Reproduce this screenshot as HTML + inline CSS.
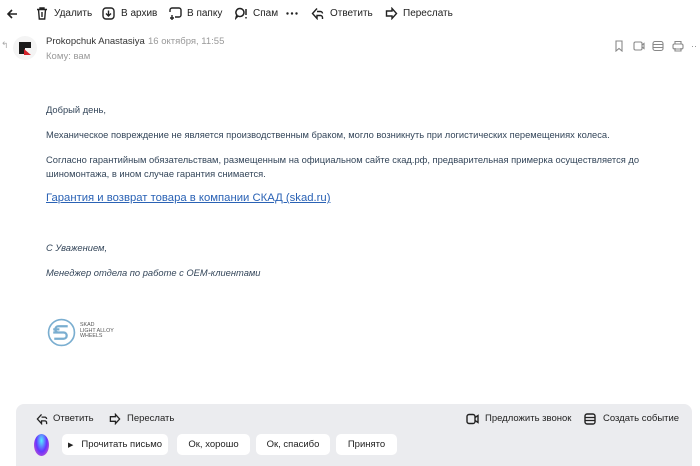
<!DOCTYPE html>
<html><head><meta charset="utf-8"><style>
*{margin:0;padding:0;box-sizing:border-box}
body{width:700px;height:464px;overflow:hidden;background:#fff;font-family:"Liberation Sans",sans-serif;color:#222;position:relative}
.a{position:absolute;white-space:nowrap}
.tb{font-size:10px;color:#222}
.body{font-size:9.35px;color:#34465a}
.it{font-style:italic}
.panel{position:absolute;left:16px;top:404px;width:676px;height:62px;background:#ebecef;border-radius:8px 8px 0 0}
.btn{position:absolute;top:30px;height:21px;background:#fff;border-radius:5px;font-size:9.5px;line-height:21px;text-align:center;color:#222}
svg{position:absolute}
</style></head><body>
<!-- toolbar -->
<svg style="left:6px;top:8px" width="12" height="12" viewBox="0 0 12 12"><path d="M11 6H2M6 2L2 6l4 4" stroke="#222" stroke-width="1.6" fill="none"/></svg>
<svg style="left:36px;top:7px" width="12" height="13" viewBox="0 0 12 13"><path d="M1 2.5h10M4 2.5V1h4v1.5M2.5 2.5l.8 9.5h5.4l.8-9.5M6 5v5" stroke="#222" stroke-width="1.4" fill="none"/></svg>
<div class="a tb" style="left:54px;top:8px">Удалить</div>
<svg style="left:102px;top:7px" width="13" height="13" viewBox="0 0 13 13"><rect x="1" y="1" width="11" height="11" rx="3" stroke="#222" stroke-width="1.4" fill="none"/><path d="M6.5 3.5v5M4 6.5l2.5 2.5L9 6.5" stroke="#222" stroke-width="1.4" fill="none"/></svg>
<div class="a tb" style="left:121px;top:8px">В архив</div>
<svg style="left:169px;top:7px" width="13" height="13" viewBox="0 0 13 13"><path d="M3 1h7a2 2 0 0 1 2 2v5a2 2 0 0 1-2 2H6M1 5V3a2 2 0 0 1 2-2M3 8v5M1 11h4" stroke="#222" stroke-width="1.4" fill="none"/></svg>
<div class="a tb" style="left:187px;top:8px">В папку</div>
<svg style="left:235px;top:7px" width="13" height="13" viewBox="0 0 13 13"><path d="M5 1.5a4 4 0 1 1-2 7.5L1 11l.8-3A4 4 0 0 1 5 1.5zM11 2v6M11 10v1.5" stroke="#222" stroke-width="1.5" fill="none"/></svg>
<div class="a tb" style="left:253px;top:8px">Спам</div>
<svg style="left:286px;top:12px" width="12" height="3" viewBox="0 0 12 3"><circle cx="1.5" cy="1.5" r="1.2" fill="#222"/><circle cx="6" cy="1.5" r="1.2" fill="#222"/><circle cx="10.5" cy="1.5" r="1.2" fill="#222"/></svg>
<svg style="left:311px;top:7px" width="13" height="13" viewBox="0 0 13 13"><path d="M6 1.5L1.5 6.5 6 11.5V8.5h3.5a2 2 0 0 1 2 2V12M6 4.5h3.5a2 2 0 0 1 2 2" stroke="#222" stroke-width="1.4" fill="none"/></svg>
<div class="a tb" style="left:330px;top:8px">Ответить</div>
<svg style="left:385px;top:7px" width="13" height="13" viewBox="0 0 13 13"><path d="M7 1.5l4.5 5L7 11.5V9H1.5V4H7z" stroke="#222" stroke-width="1.4" fill="none"/></svg>
<div class="a tb" style="left:403px;top:8px">Переслать</div>
<!-- header -->
<div class="a" style="left:1px;top:40px;font-size:9px;color:#aaa">↰</div>
<div class="a" style="left:13px;top:36px;width:24px;height:24px;border-radius:50%;background:#f4f4f4"></div>
<svg style="left:17px;top:40px" width="16" height="16" viewBox="0 0 16 16"><path d="M2 2h12v6H8v6H2z" fill="#1a1a1a"/><path d="M7 9l7 6H7z" fill="#d3222a"/></svg>
<div class="a" style="left:46px;top:36px;font-size:9.5px;color:#333">Prokopchuk Anastasiya</div>
<div class="a" style="left:148px;top:36px;font-size:9.5px;color:#999">16 октября, 11:55</div>
<div class="a" style="left:46px;top:51px;font-size:9.5px;color:#999">Кому: вам</div>
<svg style="left:614px;top:40px" width="85" height="12" viewBox="0 0 85 12"><g stroke="#888" stroke-width="1.1" fill="none"><path d="M2 1h6v10L5 8.5 2 11z"/><rect x="20" y="2" width="8" height="8" rx="1.5"/><path d="M28 5l2-1.5v5L28 7"/><rect x="39" y="1.5" width="10" height="9" rx="2"/><path d="M39 4.5h10M39 7.5h10"/><rect x="59" y="4" width="10" height="5" rx="1.5"/><path d="M61 4V1.5h6V4M61 8v3h6V8"/></g><text x="77" y="9" font-size="9" fill="#888" font-family="Liberation Sans">··</text></svg>
<!-- body -->
<div class="a body" style="left:46px;top:105px">Добрый день,</div>
<div class="a body" style="left:46px;top:130px">Механическое повреждение не является производственным браком, могло возникнуть при логистических перемещениях колеса.</div>
<div class="a body" style="left:46px;top:155px">Согласно гарантийным обязательствам, размещенным на официальном сайте скад.рф, предварительная примерка осуществляется до</div>
<div class="a body" style="left:46px;top:169px">шиномонтажа, в ином случае гарантия снимается.</div>
<div class="a" style="left:46px;top:192px;font-size:11.3px;color:#2a62b5;text-decoration:underline">Гарантия и возврат товара в компании СКАД (skad.ru)</div>
<div class="a body it" style="left:46px;top:243px">С Уважением,</div>
<div class="a body it" style="left:46px;top:268px">Менеджер отдела по работе с OEM-клиентами</div>
<!-- logo -->
<svg style="left:47px;top:318px" width="29" height="29" viewBox="0 0 28 28"><circle cx="14" cy="14" r="12.5" stroke="#7aaed0" stroke-width="1.6" fill="none"/><path d="M20 8H11a3 3 0 0 0 0 6h5a3 3 0 0 1 0 6H7M6 11h6M6 14h5" stroke="#7aaed0" stroke-width="2.2" fill="none"/></svg>
<div class="a" style="left:80px;top:323px;font-size:5.3px;line-height:5.5px;color:#555">SKAD<br>LIGHT ALLOY<br>WHEELS</div>
<!-- panel -->
<div class="panel">
<svg style="left:20px;top:9px" width="12" height="12" viewBox="0 0 13 13"><path d="M6 1.5L1.5 6.5 6 11.5V8.5h3.5a2 2 0 0 1 2 2V12M6 4.5h3.5a2 2 0 0 1 2 2" stroke="#222" stroke-width="1.4" fill="none"/></svg>
<div class="a tb" style="left:37px;top:9px;font-size:9.5px">Ответить</div>
<svg style="left:93px;top:9px" width="12" height="12" viewBox="0 0 13 13"><path d="M7 1.5l4.5 5L7 11.5V9H1.5V4H7z" stroke="#222" stroke-width="1.4" fill="none"/></svg>
<div class="a tb" style="left:111px;top:9px;font-size:9.5px">Переслать</div>
<svg style="left:450px;top:9px" width="13" height="12" viewBox="0 0 13 12"><rect x="1" y="1.5" width="8" height="9" rx="2" stroke="#222" stroke-width="1.4" fill="none"/><path d="M9 4.5l3-2v7l-3-2" stroke="#222" stroke-width="1.4" fill="none"/></svg>
<div class="a tb" style="left:469px;top:9px;font-size:9.5px">Предложить звонок</div>
<svg style="left:568px;top:9px" width="12" height="12" viewBox="0 0 12 12"><rect x="1" y="1" width="10" height="10" rx="2" stroke="#222" stroke-width="1.4" fill="none"/><path d="M1 4.5h10M1 7.5h10" stroke="#222" stroke-width="1.2"/></svg>
<div class="a tb" style="left:587px;top:9px;font-size:9.5px">Создать событие</div>
<div class="a" style="left:18px;top:30px;width:15px;height:22px;border-radius:50%;background:radial-gradient(ellipse at 50% 30%,#5ef 0%,#63f 50%,#e6b 100%)"></div>
<div class="btn" style="left:46px;width:106px"><span style="font-size:7px;margin-right:8px">▶</span>Прочитать письмо</div>
<div class="btn" style="left:161px;width:73px">Ок, хорошо</div>
<div class="btn" style="left:240px;width:74px">Ок, спасибо</div>
<div class="btn" style="left:320px;width:61px">Принято</div>
</div>
</body></html>
